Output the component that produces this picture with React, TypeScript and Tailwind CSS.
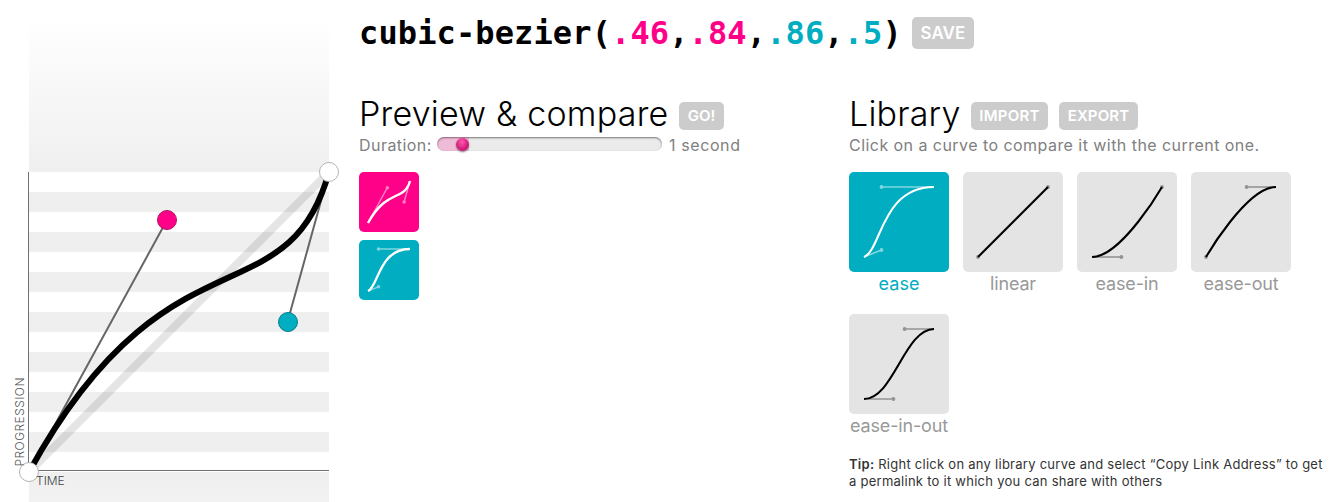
import type { ReactNode } from 'react';

type Bezier = [number, number, number, number];

type LibraryCurve = { name: string; points: Bezier; selected?: boolean };

const LIBRARY: LibraryCurve[] = [
  { name: 'ease', points: [0.25, 0.1, 0.25, 1], selected: true },
  { name: 'linear', points: [0, 0, 1, 1] },
  { name: 'ease-in', points: [0.42, 0, 1, 1] },
  { name: 'ease-out', points: [0, 0, 0.58, 1] },
  { name: 'ease-in-out', points: [0.42, 0, 0.58, 1] },
];

function CurveIcon({
  points,
  light,
  className,
  width,
  handleWidth,
  dot,
}: {
  points: Bezier;
  light?: boolean;
  className: string;
  width: number;
  handleWidth: number;
  dot: number;
}) {
  const [a, b, c, d] = points;
  const x = (v: number) => 15 + v * 70;
  const y = (v: number) => 85 - v * 70;
  const color = light ? '#fff' : '#000';
  return (
    <svg viewBox="0 0 100 100" className={className}>
      <g opacity={light ? 0.5 : 0.35} stroke={color} fill={color}>
        <path d={`M${x(0)} ${y(0)}L${x(a)} ${y(b)}M${x(1)} ${y(1)}L${x(c)} ${y(d)}`} strokeWidth={handleWidth} />
        <circle cx={x(a)} cy={y(b)} r={dot} stroke="none" />
        <circle cx={x(c)} cy={y(d)} r={dot} stroke="none" />
      </g>
      <path
        d={`M${x(0)} ${y(0)}C${x(a)} ${y(b)} ${x(c)} ${y(d)} ${x(1)} ${y(1)}`}
        fill="none"
        stroke={color}
        strokeWidth={width}
      />
    </svg>
  );
}

function Button({ children, className }: { children: ReactNode; className: string }) {
  return (
    <button className={`flex shrink-0 items-center justify-center rounded-[5px] bg-[#ccc] font-semibold whitespace-nowrap text-white ${className}`}>
      {children}
    </button>
  );
}

function Plane() {
  return (
    <section className="relative flex h-[502px] w-[359px] shrink-0 flex-col pl-[29px]">
      <div className="h-[172px] w-[300px] bg-linear-to-b from-white from-[12%] to-[#efefef]" />
      <div className="h-[300px] w-[300px] bg-[repeating-linear-gradient(to_bottom,#fff_0,#fff_20px,#efefef_20px,#efefef_40px)]" />
      <div className="h-[30px] w-[300px] bg-linear-to-b from-[#efefef] to-[#f2f2f2]" />
      <div className="absolute top-[452px] left-[29px] h-5 w-[300px] bg-white" />
      <svg className="absolute top-0 left-0" width="345" height="502" viewBox="0 0 345 502">
        <path d="M28.5 172V471M28 470.5H329" stroke="#707070" fill="none" />
        <path d="M29 472L329 172" stroke="#000" strokeOpacity=".1" strokeWidth="8" />
        <path d="M29 472L167 220M329 172L287.5 322" stroke="#666" strokeWidth="2" />
        <path d="M29 472C167 220 287 322 329 172" stroke="#000" strokeWidth="6" fill="none" />
        <circle cx="29" cy="472" r="9.5" fill="#fff" stroke="#b4b4b4" />
        <circle cx="329" cy="172" r="9.5" fill="#fff" stroke="#b4b4b4" />
        <circle cx="167" cy="220" r="9.5" fill="#ff0088" stroke="#b3135f" />
        <circle cx="288" cy="322" r="9.5" fill="#00adc1" stroke="#0e7d8b" />
      </svg>
      <span className="absolute bottom-[36px] left-[13px] rotate-180 text-[12px] leading-[14px] tracking-[0.45px] text-[#555] [writing-mode:vertical-rl] font-light">
        PROGRESSION
      </span>
      <span className="absolute top-[473px] left-[36px] text-[12px] leading-[15px] font-light text-[#444]">TIME</span>
    </section>
  );
}

export default function App() {
  return (
    <main className="flex h-[502px] w-[1339px] overflow-hidden bg-white font-['Inter','Liberation_Sans',sans-serif] text-black">
      <Plane />
      <div className="flex min-w-0 flex-1 flex-col">
        <header className="flex h-[92px] items-start pt-[14px]">
          <h1 className="font-['DejaVu_Sans_Mono',monospace] text-[32px] leading-[38px] font-bold tracking-[0.12px] whitespace-nowrap">
            cubic-bezier(<span className="text-[#ff0088]">.46</span>,<span className="text-[#ff0088]">.84</span>,
            <span className="text-[#00adc1]">.86</span>,<span className="text-[#00adc1]">.5</span>)
          </h1>
          <Button className="mt-[3px] ml-[10px] h-8 w-[62px] pt-px text-[17px]">SAVE</Button>
        </header>
        <div className="flex">
          <section className="w-[490px] shrink-0">
            <div className="flex h-[43px] items-start">
              <h2 className="w-[320px] text-[34px] leading-[43px] font-light tracking-[0.22px] whitespace-nowrap">Preview &amp; compare</h2>
              <Button className="mt-[10px] h-7 w-[45px] text-[15px]">GO!</Button>
            </div>
            <div className="flex h-[37px] items-start text-[16px] leading-[20px] tracking-[0.45px] text-[#808080]">
              <span className="w-[78px] whitespace-nowrap">Duration:</span>
              <div className="mt-[2px] flex h-[14px] w-[225px] items-center rounded-full bg-[#ebebeb] shadow-[inset_0_1px_2px_#777]">
                <div className="flex h-[14px] w-[32px] items-center justify-end rounded-l-full bg-[#ff0088]/20">
                  <span className="size-[13px] rounded-full bg-radial-[at_45%_30%] from-[#ff58ae] to-[#b8005f] to-90% shadow-[0_1px_2px_#777]" />
                </div>
              </div>
              <span className="ml-[7px] whitespace-nowrap tracking-[0.6px]">1 second</span>
            </div>
            <div className="flex flex-col gap-2">
              <CurveIcon points={[0.46, 0.84, 0.86, 0.5]} light width={4} handleWidth={2.4} dot={3} className="size-[60px] rounded-[5px] bg-[#ff0088]" />
              <CurveIcon points={[0.25, 0.1, 0.25, 1]} light width={4} handleWidth={2.4} dot={3} className="size-[60px] rounded-[5px] bg-[#00adc1]" />
            </div>
          </section>
          <section className="w-[490px] shrink-0">
            <div className="flex h-[43px] items-start">
              <h2 className="w-[122px] text-[34px] leading-[43px] font-light tracking-[0.22px] whitespace-nowrap">Library</h2>
              <Button className="mt-[10px] h-7 w-[77px] text-[15px] tracking-[0.25px]">IMPORT</Button>
              <Button className="mt-[10px] ml-[11px] h-7 w-[79px] text-[15px] tracking-[0.15px]">EXPORT</Button>
            </div>
            <p className="h-[37px] text-[16px] leading-[20px] tracking-[0.45px] whitespace-nowrap text-[#808080]">
              Click on a curve to compare it with the current one.
            </p>
            <div className="flex flex-wrap gap-x-[14px]">
              {LIBRARY.map(({ name, points, selected }) => (
                <a key={name} className="flex h-[142px] w-[100px] flex-col items-center">
                  <CurveIcon
                    points={points}
                    light={selected}
                    width={2.1}
                    handleWidth={1.6}
                    dot={1.9}
                    className={selected ? 'size-[100px] rounded-[5px] bg-[#00adc1]' : 'size-[100px] rounded-[5px] bg-[#e4e4e4]'}
                  />
                  <span className={selected ? 'text-[18px] leading-[24px] text-[#00adc1]' : 'text-[18px] leading-[24px] tracking-[-0.15px] whitespace-nowrap text-[#999]'}>
                    {name}
                  </span>
                </a>
              ))}
            </div>
            <p className="text-[13px] leading-[17px] tracking-[0.26px] whitespace-nowrap text-[#333]">
              <b className="font-semibold">Tip:</b> Right click on any library curve and select “Copy Link Address” to get
              <br />a permalink to it which you can share with others
            </p>
          </section>
        </div>
      </div>
    </main>
  );
}
